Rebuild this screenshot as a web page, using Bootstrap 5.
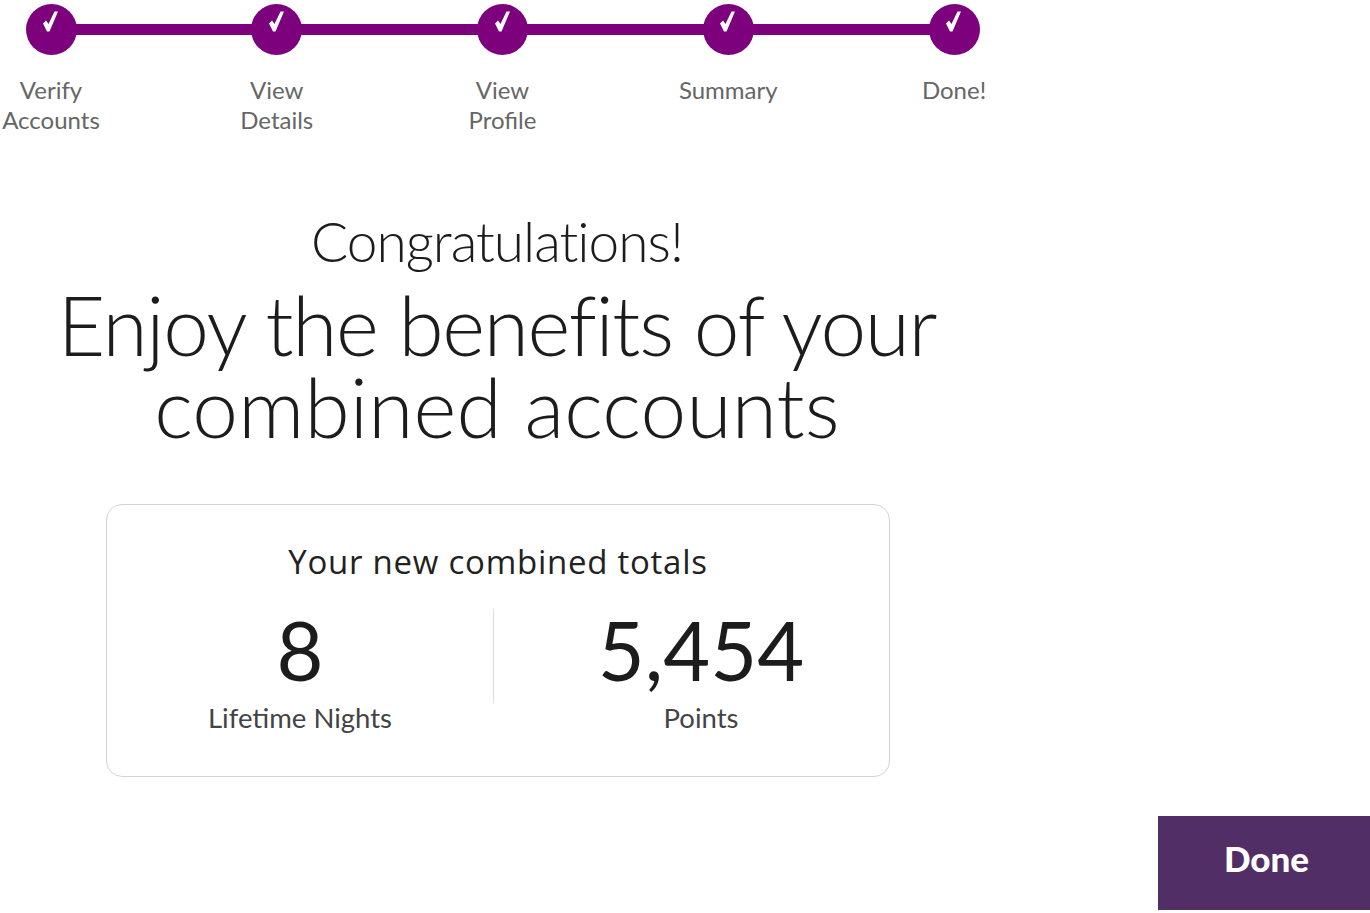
<!DOCTYPE html>
<html lang="en"><head><meta charset="utf-8"><title>Done</title>
<link href="https://cdn.jsdelivr.net/npm/bootstrap@5.3.0/dist/css/bootstrap.min.css" rel="stylesheet">
<style>
body{font-family:Lato,"Liberation Sans",sans-serif;background:#fff;overflow:hidden;height:913px}
.stepper{width:1005px;padding-top:4px;height:214px}
.onestep{width:102px;position:relative}
.onestep:not(:last-child)::after{content:"";position:absolute;top:20px;left:51px;width:226px;height:11px;background:#7d007d}
.dot{width:51px;height:51px;border-radius:50%;background:#7d007d;position:relative;z-index:1}
.dot svg{margin-top:4px}
.steplabel{margin-top:20px;font-size:24px;line-height:30px;color:#666;text-align:center;white-space:nowrap;font-weight:400}
.mainzone{width:994px}
.greet{font-size:55px;line-height:60px;font-weight:300;color:#1c1c1c;margin:-3px 0 12px;letter-spacing:-1px}
.headline{font-size:82px;line-height:82px;font-weight:300;color:#1c1c1c;margin:0;letter-spacing:-1.3px}
.secondline{letter-spacing:.2px}
.totals{width:784px;height:273px;margin:57px 0 0 106px;border:1px solid #d4d4d4;border-radius:16px;padding-top:35px}
.totalstitle{font-size:33px;line-height:44px;color:#222;font-family:"Open Sans",sans-serif;margin:0;letter-spacing:.75px}
.cols{margin-top:25px}
.half{height:94px}
.half:first-child{border-right:1px solid #ddd;width:387px}
.half:last-child{width:395px;padding-left:19px}
.bignum{font-size:81px;line-height:88px;color:#1c1c1c;font-weight:400;margin-top:-3px}
.numlabel{font-size:27.500px;line-height:32px;color:#444;margin-top:8px}
.finish{width:212px;height:94px;background:#522e66;border:0;border-radius:0;color:#fff;font-size:35px;font-weight:900;margin-top:39px;padding:0 0 9px 5px}
.finish:hover{background:#522e66;color:#fff}
</style></head><body>
<div class="stepper d-flex justify-content-between">
 <div class="onestep d-flex flex-column align-items-center"><div class="dot d-flex align-items-start justify-content-center"><svg width="24" height="28" viewBox="0 0 24 28"><path d="M4 15.500L7 12.500l2.500 3.500L15.500 3.500H19L10.500 23.500H8z" fill="#fff"/></svg></div><div class="steplabel">Verify<br>Accounts</div></div>
 <div class="onestep d-flex flex-column align-items-center"><div class="dot d-flex align-items-start justify-content-center"><svg width="24" height="28" viewBox="0 0 24 28"><path d="M4 15.500L7 12.500l2.500 3.500L15.500 3.500H19L10.500 23.500H8z" fill="#fff"/></svg></div><div class="steplabel">View<br>Details</div></div>
 <div class="onestep d-flex flex-column align-items-center"><div class="dot d-flex align-items-start justify-content-center"><svg width="24" height="28" viewBox="0 0 24 28"><path d="M4 15.500L7 12.500l2.500 3.500L15.500 3.500H19L10.500 23.500H8z" fill="#fff"/></svg></div><div class="steplabel">View<br>Profile</div></div>
 <div class="onestep d-flex flex-column align-items-center"><div class="dot d-flex align-items-start justify-content-center"><svg width="24" height="28" viewBox="0 0 24 28"><path d="M4 15.500L7 12.500l2.500 3.500L15.500 3.500H19L10.500 23.500H8z" fill="#fff"/></svg></div><div class="steplabel">Summary</div></div>
 <div class="onestep d-flex flex-column align-items-center"><div class="dot d-flex align-items-start justify-content-center"><svg width="24" height="28" viewBox="0 0 24 28"><path d="M4 15.500L7 12.500l2.500 3.500L15.500 3.500H19L10.500 23.500H8z" fill="#fff"/></svg></div><div class="steplabel">Done!</div></div>
</div>
<div class="mainzone text-center">
 <h2 class="greet">Congratulations!</h2>
 <h1 class="headline">Enjoy the benefits of your<br><span class="secondline">combined accounts</span></h1>
 <div class="totals">
  <p class="totalstitle">Your new combined totals</p>
  <div class="cols d-flex">
   <div class="half"><div class="bignum">8</div><div class="numlabel">Lifetime Nights</div></div>
   <div class="half"><div class="bignum">5,454</div><div class="numlabel">Points</div></div>
  </div>
 </div>
</div>
<div class="d-flex justify-content-end"><button type="button" class="btn finish">Done</button></div>
<script src="https://cdn.jsdelivr.net/npm/bootstrap@5.3.0/dist/js/bootstrap.bundle.min.js"></script>
</body></html>
